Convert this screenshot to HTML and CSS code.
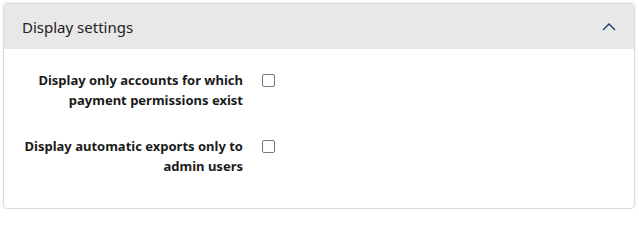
FILE: index.html
```html
<!DOCTYPE html>
<html>
<head>
<meta charset="utf-8">
<link rel="stylesheet" href="styles.css">
</head>
<body>
<section class="card">
  <header class="card-header">
    <span class="card-title">Display settings</span>
    <svg class="chevron" width="14" height="9" viewBox="0 0 14 9"><path d="M1 8 L7 2 L13 8" fill="none" stroke="#1f3b6e" stroke-width="1.4"/></svg>
  </header>
  <div class="card-body">
    <div class="row">
      <label class="label">Display only accounts for which payment permissions exist</label>
      <span class="checkbox"></span>
    </div>
    <div class="row">
      <label class="label">Display automatic exports only to admin users</label>
      <span class="checkbox"></span>
    </div>
  </div>
</section>
</body>
</html>
```
FILE: styles.css
```css
html, body { margin: 0; padding: 0; background: #fff; }
body { font-family: "Noto Sans", "Open Sans", sans-serif; color: #222; padding: 3px 4px 4px 3px; }
.card {
  border: 1px solid #dcdcdc;
  border-radius: 4px;
  height: 206px;
  box-sizing: border-box;
  overflow: hidden;
  box-shadow: 0 -1px 3px rgba(0,0,0,0.08);
}
.card-header {
  background: #e8e8e8;
  height: 45px;
  display: flex;
  align-items: center;
  justify-content: space-between;
  padding: 0 18px 0 18px;
}
.card-title { font-size: 15px; color: #222; }
.chevron { display: block; }
.card-body { padding: 21px 0 0 0; display: flex; flex-direction: column; gap: 26px; }
.row { display: flex; align-items: flex-start; }
.label {
  width: 239px;
  text-align: right;
  font-weight: 700;
  font-size: 13px;
  line-height: 20px;
  color: #1a1a1a;
}
.checkbox {
  margin-left: 19px;
  margin-top: 4px;
  width: 11px; height: 11px;
  border: 1px solid #777;
  border-radius: 2px;
}
```
